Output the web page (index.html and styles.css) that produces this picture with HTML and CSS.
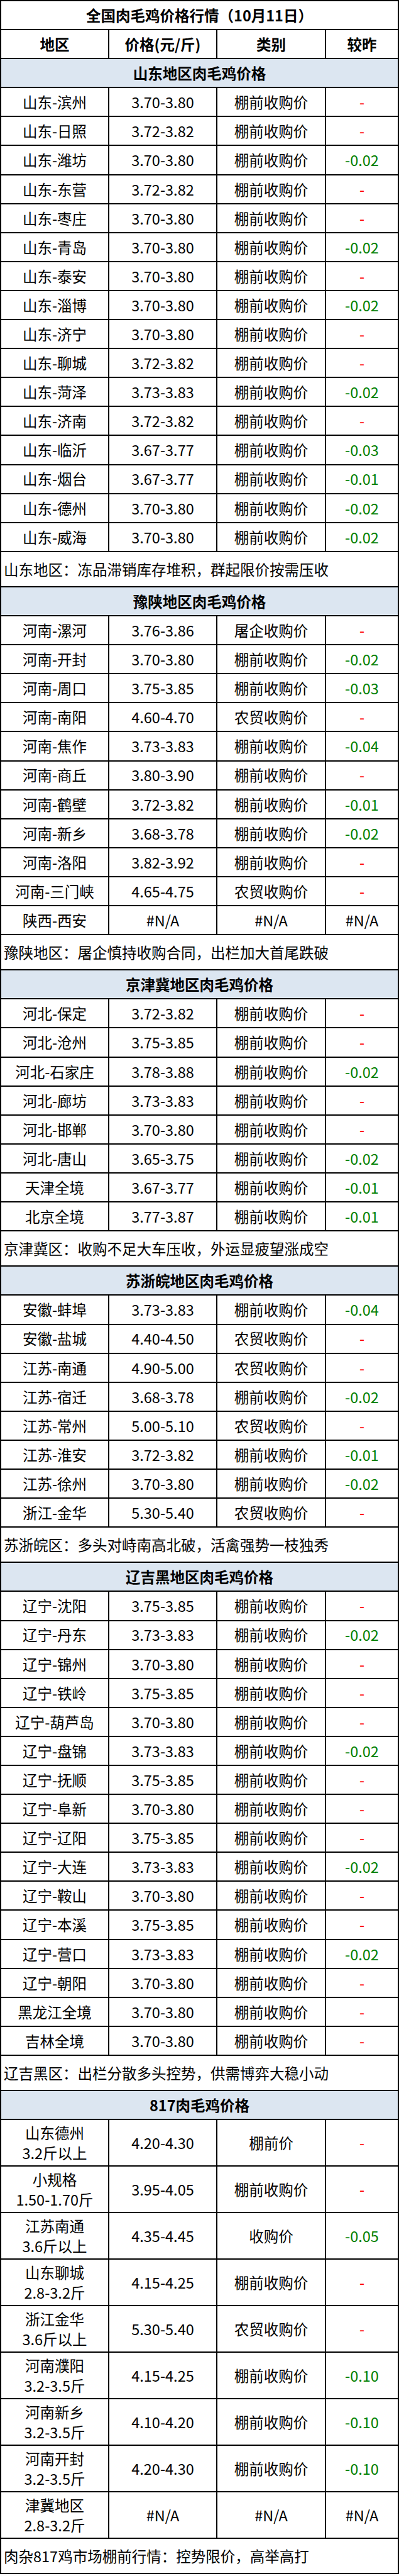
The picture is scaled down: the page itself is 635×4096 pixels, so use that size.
FILE: index.html
```html
<!DOCTYPE html>
<html lang="zh-CN">
<head>
<meta charset="utf-8">
<title>全国肉毛鸡价格行情</title>
<link rel="stylesheet" href="styles.css">
</head>
<body>
<table class="sheet">
<colgroup><col class="c1"><col class="c2"><col class="c3"><col class="c4"></colgroup>
<tbody>
<tr class="r"><td colspan="4" class="title">全国肉毛鸡价格行情（10月11日）</td></tr>
<tr class="r head"><td>地区</td><td>价格(元/斤)</td><td>类别</td><td>较昨</td></tr>

<tr class="r"><td colspan="4" class="sec">山东地区肉毛鸡价格</td></tr>
<tr class="r"><td>山东-滨州</td><td>3.70-3.80</td><td>棚前收购价</td><td class="flat">-</td></tr>
<tr class="r"><td>山东-日照</td><td>3.72-3.82</td><td>棚前收购价</td><td class="flat">-</td></tr>
<tr class="r"><td>山东-潍坊</td><td>3.70-3.80</td><td>棚前收购价</td><td class="down">-0.02</td></tr>
<tr class="r"><td>山东-东营</td><td>3.72-3.82</td><td>棚前收购价</td><td class="flat">-</td></tr>
<tr class="r"><td>山东-枣庄</td><td>3.70-3.80</td><td>棚前收购价</td><td class="flat">-</td></tr>
<tr class="r"><td>山东-青岛</td><td>3.70-3.80</td><td>棚前收购价</td><td class="down">-0.02</td></tr>
<tr class="r"><td>山东-泰安</td><td>3.70-3.80</td><td>棚前收购价</td><td class="flat">-</td></tr>
<tr class="r"><td>山东-淄博</td><td>3.70-3.80</td><td>棚前收购价</td><td class="down">-0.02</td></tr>
<tr class="r"><td>山东-济宁</td><td>3.70-3.80</td><td>棚前收购价</td><td class="flat">-</td></tr>
<tr class="r"><td>山东-聊城</td><td>3.72-3.82</td><td>棚前收购价</td><td class="flat">-</td></tr>
<tr class="r"><td>山东-菏泽</td><td>3.73-3.83</td><td>棚前收购价</td><td class="down">-0.02</td></tr>
<tr class="r"><td>山东-济南</td><td>3.72-3.82</td><td>棚前收购价</td><td class="flat">-</td></tr>
<tr class="r"><td>山东-临沂</td><td>3.67-3.77</td><td>棚前收购价</td><td class="down">-0.03</td></tr>
<tr class="r"><td>山东-烟台</td><td>3.67-3.77</td><td>棚前收购价</td><td class="down">-0.01</td></tr>
<tr class="r"><td>山东-德州</td><td>3.70-3.80</td><td>棚前收购价</td><td class="down">-0.02</td></tr>
<tr class="r"><td>山东-威海</td><td>3.70-3.80</td><td>棚前收购价</td><td class="down">-0.02</td></tr>
<tr class="note"><td colspan="4">山东地区：冻品滞销库存堆积，群起限价按需压收</td></tr>

<tr class="r"><td colspan="4" class="sec">豫陕地区肉毛鸡价格</td></tr>
<tr class="r"><td>河南-漯河</td><td>3.76-3.86</td><td>屠企收购价</td><td class="flat">-</td></tr>
<tr class="r"><td>河南-开封</td><td>3.70-3.80</td><td>棚前收购价</td><td class="down">-0.02</td></tr>
<tr class="r"><td>河南-周口</td><td>3.75-3.85</td><td>棚前收购价</td><td class="down">-0.03</td></tr>
<tr class="r"><td>河南-南阳</td><td>4.60-4.70</td><td>农贸收购价</td><td class="flat">-</td></tr>
<tr class="r"><td>河南-焦作</td><td>3.73-3.83</td><td>棚前收购价</td><td class="down">-0.04</td></tr>
<tr class="r"><td>河南-商丘</td><td>3.80-3.90</td><td>棚前收购价</td><td class="flat">-</td></tr>
<tr class="r"><td>河南-鹤壁</td><td>3.72-3.82</td><td>棚前收购价</td><td class="down">-0.01</td></tr>
<tr class="r"><td>河南-新乡</td><td>3.68-3.78</td><td>棚前收购价</td><td class="down">-0.02</td></tr>
<tr class="r"><td>河南-洛阳</td><td>3.82-3.92</td><td>棚前收购价</td><td class="flat">-</td></tr>
<tr class="r"><td>河南-三门峡</td><td>4.65-4.75</td><td>农贸收购价</td><td class="flat">-</td></tr>
<tr class="r"><td>陕西-西安</td><td>#N/A</td><td>#N/A</td><td>#N/A</td></tr>
<tr class="note"><td colspan="4">豫陕地区：屠企慎持收购合同，出栏加大首尾跌破</td></tr>

<tr class="r"><td colspan="4" class="sec">京津冀地区肉毛鸡价格</td></tr>
<tr class="r"><td>河北-保定</td><td>3.72-3.82</td><td>棚前收购价</td><td class="flat">-</td></tr>
<tr class="r"><td>河北-沧州</td><td>3.75-3.85</td><td>棚前收购价</td><td class="flat">-</td></tr>
<tr class="r"><td>河北-石家庄</td><td>3.78-3.88</td><td>棚前收购价</td><td class="down">-0.02</td></tr>
<tr class="r"><td>河北-廊坊</td><td>3.73-3.83</td><td>棚前收购价</td><td class="flat">-</td></tr>
<tr class="r"><td>河北-邯郸</td><td>3.70-3.80</td><td>棚前收购价</td><td class="flat">-</td></tr>
<tr class="r"><td>河北-唐山</td><td>3.65-3.75</td><td>棚前收购价</td><td class="down">-0.02</td></tr>
<tr class="r"><td>天津全境</td><td>3.67-3.77</td><td>棚前收购价</td><td class="down">-0.01</td></tr>
<tr class="r"><td>北京全境</td><td>3.77-3.87</td><td>棚前收购价</td><td class="down">-0.01</td></tr>
<tr class="note"><td colspan="4">京津冀区：收购不足大车压收，外运显疲望涨成空</td></tr>

<tr class="r"><td colspan="4" class="sec">苏浙皖地区肉毛鸡价格</td></tr>
<tr class="r"><td>安徽-蚌埠</td><td>3.73-3.83</td><td>棚前收购价</td><td class="down">-0.04</td></tr>
<tr class="r"><td>安徽-盐城</td><td>4.40-4.50</td><td>农贸收购价</td><td class="flat">-</td></tr>
<tr class="r"><td>江苏-南通</td><td>4.90-5.00</td><td>农贸收购价</td><td class="flat">-</td></tr>
<tr class="r"><td>江苏-宿迁</td><td>3.68-3.78</td><td>棚前收购价</td><td class="down">-0.02</td></tr>
<tr class="r"><td>江苏-常州</td><td>5.00-5.10</td><td>农贸收购价</td><td class="flat">-</td></tr>
<tr class="r"><td>江苏-淮安</td><td>3.72-3.82</td><td>棚前收购价</td><td class="down">-0.01</td></tr>
<tr class="r"><td>江苏-徐州</td><td>3.70-3.80</td><td>棚前收购价</td><td class="down">-0.02</td></tr>
<tr class="r"><td>浙江-金华</td><td>5.30-5.40</td><td>农贸收购价</td><td class="flat">-</td></tr>
<tr class="note"><td colspan="4">苏浙皖区：多头对峙南高北破，活禽强势一枝独秀</td></tr>

<tr class="r"><td colspan="4" class="sec">辽吉黑地区肉毛鸡价格</td></tr>
<tr class="r"><td>辽宁-沈阳</td><td>3.75-3.85</td><td>棚前收购价</td><td class="flat">-</td></tr>
<tr class="r"><td>辽宁-丹东</td><td>3.73-3.83</td><td>棚前收购价</td><td class="down">-0.02</td></tr>
<tr class="r"><td>辽宁-锦州</td><td>3.70-3.80</td><td>棚前收购价</td><td class="flat">-</td></tr>
<tr class="r"><td>辽宁-铁岭</td><td>3.75-3.85</td><td>棚前收购价</td><td class="flat">-</td></tr>
<tr class="r"><td>辽宁-葫芦岛</td><td>3.70-3.80</td><td>棚前收购价</td><td class="flat">-</td></tr>
<tr class="r"><td>辽宁-盘锦</td><td>3.73-3.83</td><td>棚前收购价</td><td class="down">-0.02</td></tr>
<tr class="r"><td>辽宁-抚顺</td><td>3.75-3.85</td><td>棚前收购价</td><td class="flat">-</td></tr>
<tr class="r"><td>辽宁-阜新</td><td>3.70-3.80</td><td>棚前收购价</td><td class="flat">-</td></tr>
<tr class="r"><td>辽宁-辽阳</td><td>3.75-3.85</td><td>棚前收购价</td><td class="flat">-</td></tr>
<tr class="r"><td>辽宁-大连</td><td>3.73-3.83</td><td>棚前收购价</td><td class="down">-0.02</td></tr>
<tr class="r"><td>辽宁-鞍山</td><td>3.70-3.80</td><td>棚前收购价</td><td class="flat">-</td></tr>
<tr class="r"><td>辽宁-本溪</td><td>3.75-3.85</td><td>棚前收购价</td><td class="flat">-</td></tr>
<tr class="r"><td>辽宁-营口</td><td>3.73-3.83</td><td>棚前收购价</td><td class="down">-0.02</td></tr>
<tr class="r"><td>辽宁-朝阳</td><td>3.70-3.80</td><td>棚前收购价</td><td class="flat">-</td></tr>
<tr class="r"><td>黑龙江全境</td><td>3.70-3.80</td><td>棚前收购价</td><td class="flat">-</td></tr>
<tr class="r"><td>吉林全境</td><td>3.70-3.80</td><td>棚前收购价</td><td class="flat">-</td></tr>
<tr class="note"><td colspan="4">辽吉黑区：出栏分散多头控势，供需博弈大稳小动</td></tr>

<tr class="r"><td colspan="4" class="sec">817肉毛鸡价格</td></tr>
<tr class="dbl"><td>山东德州<br>3.2斤以上</td><td>4.20-4.30</td><td>棚前价</td><td class="flat">-</td></tr>
<tr class="dbl"><td>小规格<br>1.50-1.70斤</td><td>3.95-4.05</td><td>棚前收购价</td><td class="flat">-</td></tr>
<tr class="dbl"><td>江苏南通<br>3.6斤以上</td><td>4.35-4.45</td><td>收购价</td><td class="down">-0.05</td></tr>
<tr class="dbl"><td>山东聊城<br>2.8-3.2斤</td><td>4.15-4.25</td><td>棚前收购价</td><td class="flat">-</td></tr>
<tr class="dbl"><td>浙江金华<br>3.6斤以上</td><td>5.30-5.40</td><td>农贸收购价</td><td class="flat">-</td></tr>
<tr class="dbl"><td>河南濮阳<br>3.2-3.5斤</td><td>4.15-4.25</td><td>棚前收购价</td><td class="down">-0.10</td></tr>
<tr class="dbl"><td>河南新乡<br>3.2-3.5斤</td><td>4.10-4.20</td><td>棚前收购价</td><td class="down">-0.10</td></tr>
<tr class="dbl"><td>河南开封<br>3.2-3.5斤</td><td>4.20-4.30</td><td>棚前收购价</td><td class="down">-0.10</td></tr>
<tr class="dbl"><td>津冀地区<br>2.8-3.2斤</td><td>#N/A</td><td>#N/A</td><td>#N/A</td></tr>
<tr class="note"><td colspan="4">肉杂817鸡市场棚前行情：控势限价，高举高打</td></tr>
</tbody>
</table>
</body>
</html>
```

FILE: styles.css
```css
html, body {
  margin: 0;
  padding: 0;
  background: #ffffff;
}

.sheet {
  width: 635px;
  border-collapse: collapse;
  table-layout: fixed;
  font-family: "Noto Sans CJK SC", "Microsoft YaHei", sans-serif;
  font-size: 23.5px;
  color: #000000;
}

.c1 { width: 172px; }
.c2 { width: 172px; }
.c3 { width: 173px; }
.c4 { width: auto; }

.sheet td {
  border: 2px solid #000000;
  padding: 0;
  text-align: center;
  vertical-align: middle;
  white-space: nowrap;
  line-height: 1.2;
}

.r { height: 46.1px; }
.note { height: 56.2px; }
.dbl { height: 74px; }

.title,
.head td,
.sec {
  font-weight: 700;
}

.sec {
  background: #dce6f1;
}

.note td {
  text-align: left;
  padding-left: 4px;
}

.dbl td:first-child {
  line-height: 32px;
}

.flat { color: #ff0000; }
.down { color: #008000; }
```
